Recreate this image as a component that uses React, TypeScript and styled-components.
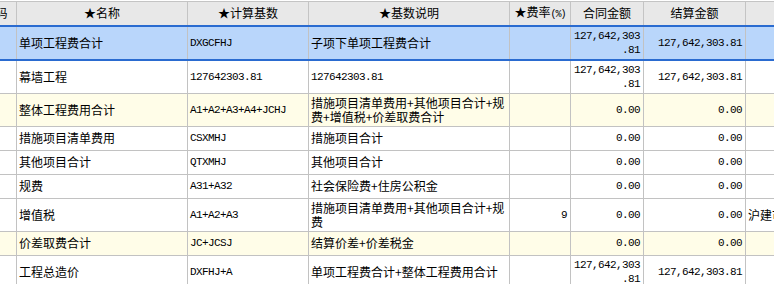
import React, { useLayoutEffect, useRef } from 'react'
import styled, { createGlobalStyle, css } from 'styled-components'

type RowKind = 'selected' | 'summary' | 'normal'

interface FeeRow {
  name: string
  base: string
  desc: string
  descMono?: boolean
  rate?: string
  contract?: string
  settle?: string
  remark?: string
  kind: RowKind
}

const rows: FeeRow[] = [
  { name: '单项工程费合计', base: 'DXGCFHJ', desc: '子项下单项工程费合计', contract: '127,642,303.81', settle: '127,642,303.81', kind: 'selected' },
  { name: '幕墙工程', base: '127642303.81', desc: '127642303.81', descMono: true, contract: '127,642,303.81', settle: '127,642,303.81', kind: 'normal' },
  { name: '整体工程费用合计', base: 'A1+A2+A3+A4+JCHJ', desc: '措施项目清单费用+其他项目合计+规费+增值税+价差取费合计', contract: '0.00', settle: '0.00', kind: 'summary' },
  { name: '措施项目清单费用', base: 'CSXMHJ', desc: '措施项目合计', contract: '0.00', settle: '0.00', kind: 'normal' },
  { name: '其他项目合计', base: 'QTXMHJ', desc: '其他项目合计', contract: '0.00', settle: '0.00', kind: 'normal' },
  { name: '规费', base: 'A31+A32', desc: '社会保险费+住房公积金', contract: '0.00', settle: '0.00', kind: 'normal' },
  { name: '增值税', base: 'A1+A2+A3', desc: '措施项目清单费用+其他项目合计+规费', rate: '9', contract: '0.00', settle: '0.00', remark: '沪建市', kind: 'normal' },
  { name: '价差取费合计', base: 'JC+JCSJ', desc: '结算价差+价差税金', contract: '0.00', settle: '0.00', kind: 'summary' },
  { name: '工程总造价', base: 'DXFHJ+A', desc: '单项工程费合计+整体工程费用合计', contract: '127,642,303.81', settle: '127,642,303.81', kind: 'normal' },
  { name: '', base: '', desc: '', kind: 'normal' },
]

const columns = [42, 171, 121, 201, 61, 73, 102, 120]

// the old grid wraps amounts before the decimal point when the column is narrow
const wrapAmount = (v?: string) => (v ? v.replace('.', '\u200B.') : v)

const GlobalStyle = createGlobalStyle`
  html, body {
    margin: 0;
    padding: 0;
    background: #fff;
  }
  body {
    font-family: "Noto Sans CJK SC", "Liberation Sans", sans-serif;
    font-size: 12px;
    color: #000;
    overflow: hidden;
  }
`

const Viewport = styled.div`
  width: 774px;
  height: 284px;
  overflow: hidden;
  padding-top: 1px;
  box-sizing: border-box;
`

const Grid = styled.table`
  border-collapse: collapse;
  table-layout: fixed;
  width: ${columns.reduce((a, b) => a + b, 0)}px;
`

const HeadRow = styled.tr`
  height: 24px;
`

const HeadCell = styled.th`
  padding: 0 2px;
  background: #e8e8e8;
  border: 1px solid #c4c4c4;
  font-weight: normal;
  text-align: center;
  white-space: nowrap;
  overflow: hidden;
  line-height: 14px;
`

const Unit = styled.span`
  font-family: "Liberation Mono", monospace;
  font-size: 10px;
  letter-spacing: -1px;
`

const BodyRow = styled.tr<{ $kind: RowKind }>`
  height: 24px;
  background: ${({ $kind }) =>
    $kind === 'selected' ? '#b9d6fb' : $kind === 'summary' ? '#fffde8' : '#ffffff'};
  ${({ $kind }) =>
    $kind === 'selected' &&
    css`
      & > td {
        border-top: 2px solid #2a6bd0;
        border-bottom: 2px solid #2a6bd0;
      }
    `}
`

const Cell = styled.td<{ $mono?: boolean }>`
  padding: 2px 3px 2px 2px;
  border: 1px solid #c2c2c2;
  line-height: 14px;
  vertical-align: middle;
  text-align: left;
  overflow: hidden;
  ${({ $mono }) =>
    $mono &&
    css`
      font-family: "Liberation Mono", monospace;
      font-size: 11px;
      letter-spacing: -0.6px;
    `}
`

const AmountCell = styled(Cell)`
  padding-left: 0;
  padding-right: 3px;
  text-align: right;
`

const RemarkCell = styled(Cell)`
  white-space: nowrap;
`

const App = () => {
  const scrollRef = useRef<HTMLDivElement>(null)

  // grid is scrolled a little to the right, code column mostly hidden
  useLayoutEffect(() => {
    if (scrollRef.current) scrollRef.current.scrollLeft = 26
  }, [])

  return (
    <>
      <GlobalStyle />
      <Viewport ref={scrollRef}>
        <Grid>
          <colgroup>
            {columns.map((w, i) => (
              <col key={i} style={{ width: w }} />
            ))}
          </colgroup>
          <thead>
            <HeadRow>
              <HeadCell>编码</HeadCell>
              <HeadCell>★名称</HeadCell>
              <HeadCell>★计算基数</HeadCell>
              <HeadCell>★基数说明</HeadCell>
              <HeadCell>
                ★费率<Unit>(%)</Unit>
              </HeadCell>
              <HeadCell>合同金额</HeadCell>
              <HeadCell>结算金额</HeadCell>
              <HeadCell />
            </HeadRow>
          </thead>
          <tbody>
            {rows.map((r, i) => (
              <BodyRow key={i} $kind={r.kind}>
                <Cell />
                <Cell>{r.name}</Cell>
                <Cell $mono>{r.base}</Cell>
                <Cell $mono={r.descMono}>{r.desc}</Cell>
                <AmountCell $mono>{r.rate}</AmountCell>
                <AmountCell $mono>{wrapAmount(r.contract)}</AmountCell>
                <AmountCell $mono>{wrapAmount(r.settle)}</AmountCell>
                <RemarkCell>{r.remark}</RemarkCell>
              </BodyRow>
            ))}
          </tbody>
        </Grid>
      </Viewport>
    </>
  )
}

export default App
